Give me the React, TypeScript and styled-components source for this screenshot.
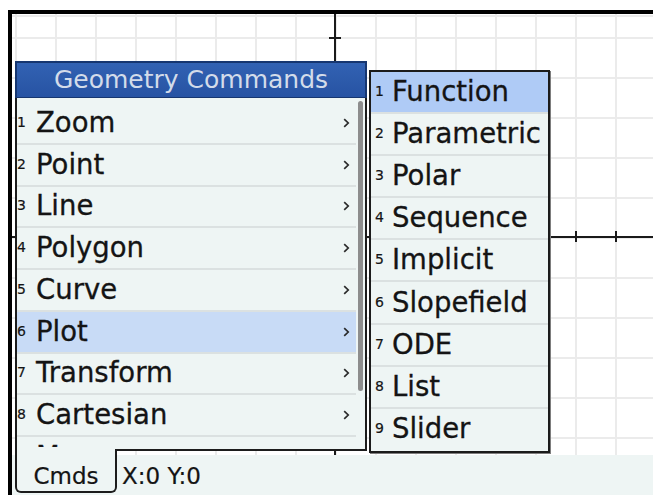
import React from "react";
import styled, { createGlobalStyle } from "styled-components";

const GlobalStyle = createGlobalStyle`
  *, *::before, *::after {
    box-sizing: border-box;
  }
  html, body {
    margin: 0;
    padding: 0;
    background: #ffffff;
    overflow: hidden;
  }
  body {
    font-family: "DejaVu Sans", "Liberation Sans", sans-serif;
    color: #141414;
  }
`;

const PLOT_W = 641;
const PLOT_H = 441;
const GRID = 40;
const GRID_X0 = 3;
const GRID_Y0 = 23;
const AXIS_X = 322;
const AXIS_Y = 222;

const MAIN_ITEMS = [
  "Zoom",
  "Point",
  "Line",
  "Polygon",
  "Curve",
  "Plot",
  "Transform",
  "Cartesian",
  "Measure",
];
const MAIN_ACTIVE = 5;

const PLOT_ITEMS = [
  "Function",
  "Parametric",
  "Polar",
  "Sequence",
  "Implicit",
  "Slopefield",
  "ODE",
  "List",
  "Slider",
];
const PLOT_ACTIVE = 0;

const Screen = styled.div`
  position: relative;
  display: flex;
  flex-direction: column;
  width: 645px;
  height: 485px;
  margin: 10px 0 0 8px;
  border-top: 4px solid #000;
  border-left: 4px solid #000;
  overflow: hidden;
`;

const PlotArea = styled.div`
  flex: 1;
  background: #ffffff;
  overflow: hidden;
`;

const StatusBar = styled.div`
  display: flex;
  align-items: flex-start;
  height: 40px;
  padding-left: 3px;
  background: #eef5f4;
`;

const SoftKey = styled.div`
  position: relative;
  z-index: 3;
  width: 102px;
  height: 44px;
  margin-top: -6px;
  padding-top: 12px;
  border: 2px solid #1c1c1c;
  border-top: none;
  border-radius: 0 0 6px 6px;
  background: #eef5f4;
  font-size: 23px;
  line-height: 30px;
  text-align: center;
  -webkit-text-stroke: 0.2px #141414;
`;

const Coords = styled.div`
  margin-left: 5px;
  padding-top: 6px;
  font-size: 23px;
  line-height: 30px;
  white-space: nowrap;
  -webkit-text-stroke: 0.2px #141414;
`;

const Menu = styled.div`
  position: absolute;
  z-index: 2;
  left: 3px;
  top: 47px;
  width: 352px;
  display: flex;
  flex-direction: column;
`;

const MenuTitle = styled.div`
  height: 37px;
  border: 2px solid #163670;
  border-bottom-width: 1px;
  background: linear-gradient(#3262b3, #2753a3);
  color: #d3dcea;
  font-size: 25px;
  line-height: 33px;
  text-align: center;
  white-space: nowrap;
`;

const MenuBody = styled.div`
  display: flex;
  height: 353px;
  border: 2px solid #1c1c1c;
  border-top: none;
  background: #eef5f4;
`;

const List = styled.div`
  flex: 1;
  margin-bottom: 2px;
  padding-top: 5px;
  overflow: hidden;
`;

const ScrollTrack = styled.div`
  width: 9px;
  padding: 3px 2px 0 2px;
`;

const ScrollThumb = styled.div`
  height: 290px;
  border-radius: 3px;
  background: #8d8d8d;
`;

const Row = styled.div<{ $highlight?: string; $height: number }>`
  display: flex;
  align-items: center;
  height: ${({ $height }) => $height}px;
  border-bottom: 2px solid #dbe1e1;
  background: ${({ $highlight }) => $highlight ?? "transparent"};
  white-space: nowrap;
  &:last-child {
    border-bottom-color: transparent;
  }
`;

const RowText = styled.div<{ $indent: number }>`
  flex: 1;
  padding-top: 3px;
  padding-left: ${({ $indent }) => $indent}px;
  line-height: 38px;
`;

const Digit = styled.span<{ $width: number }>`
  display: inline-block;
  width: ${({ $width }) => $width}px;
  font-size: 14px;
  vertical-align: 5px;
  -webkit-text-stroke: 0.2px #141414;
`;

const Label = styled.span`
  font-size: 27.5px;
  -webkit-text-stroke: 0.3px #141414;
`;

const Chevron = styled.svg`
  display: block;
  width: 7px;
  height: 10px;
  margin-right: 6px;
`;

const SubMenu = styled.div`
  position: absolute;
  z-index: 2;
  left: 357px;
  top: 56px;
  width: 181px;
  height: 383px;
  border: 2px solid #1b1b1b;
  background: #eef5f4;
  box-shadow: 1px 1px 0 #7d7d7d;
  overflow: hidden;
`;

const PlotGrid = () => {
  const cols = [];
  for (let x = GRID_X0; x < PLOT_W; x += GRID) cols.push(x);
  const rows = [1];
  for (let y = GRID_Y0; y < PLOT_H; y += GRID) rows.push(y);

  return (
    <svg width={PLOT_W} height={PLOT_H} style={{ display: "block" }}>
      {cols.map((x) => (
        <rect key={`v${x}`} x={x} y={0} width={2} height={PLOT_H} fill="#ebebeb" />
      ))}
      {rows.map((y) => (
        <rect key={`h${y}`} x={0} y={y} width={PLOT_W} height={2} fill="#ebebeb" />
      ))}
      <rect x={AXIS_X} y={0} width={2} height={PLOT_H} fill="#1a1a1a" />
      <rect x={0} y={AXIS_Y} width={PLOT_W} height={2} fill="#1a1a1a" />
      {cols.map((x) => (
        <rect key={`tx${x}`} x={x} y={AXIS_Y - 5} width={2} height={11} fill="#1a1a1a" />
      ))}
      {rows
        .filter((y) => y !== 1)
        .map((y) => (
          <rect key={`ty${y}`} x={AXIS_X - 5} y={y} width={12} height={2} fill="#1a1a1a" />
        ))}
    </svg>
  );
};

const ChevronIcon = () => (
  <Chevron viewBox="0 0 7 10">
    <polyline points="1.2,1.2 5.2,5 1.2,8.8" fill="none" stroke="#2a2a2a" strokeWidth="1.7" />
  </Chevron>
);

const App = () => {
  return (
    <>
      <GlobalStyle />
      <Screen>
        <PlotArea>
          <PlotGrid />
        </PlotArea>
        <StatusBar>
          <SoftKey>Cmds</SoftKey>
          <Coords>X:0 Y:0</Coords>
        </StatusBar>

        <Menu>
          <MenuTitle>Geometry Commands</MenuTitle>
          <MenuBody>
            <List>
              {MAIN_ITEMS.map((label, i) => (
                <Row
                  key={label}
                  $height={41.75}
                  $highlight={i === MAIN_ACTIVE ? "#c8dbf6" : undefined}
                >
                  <RowText $indent={0}>
                    <Digit $width={19}>{i + 1}</Digit>
                    <Label>{label}</Label>
                  </RowText>
                  <ChevronIcon />
                </Row>
              ))}
            </List>
            <ScrollTrack>
              <ScrollThumb />
            </ScrollTrack>
          </MenuBody>
        </Menu>

        <SubMenu>
          {PLOT_ITEMS.map((label, i) => (
            <Row
              key={label}
              $height={42.1}
              $highlight={i === PLOT_ACTIVE ? "#afcbf6" : undefined}
            >
              <RowText $indent={4}>
                <Digit $width={17}>{i + 1}</Digit>
                <Label>{label}</Label>
              </RowText>
            </Row>
          ))}
        </SubMenu>
      </Screen>
    </>
  );
};

export default App;
